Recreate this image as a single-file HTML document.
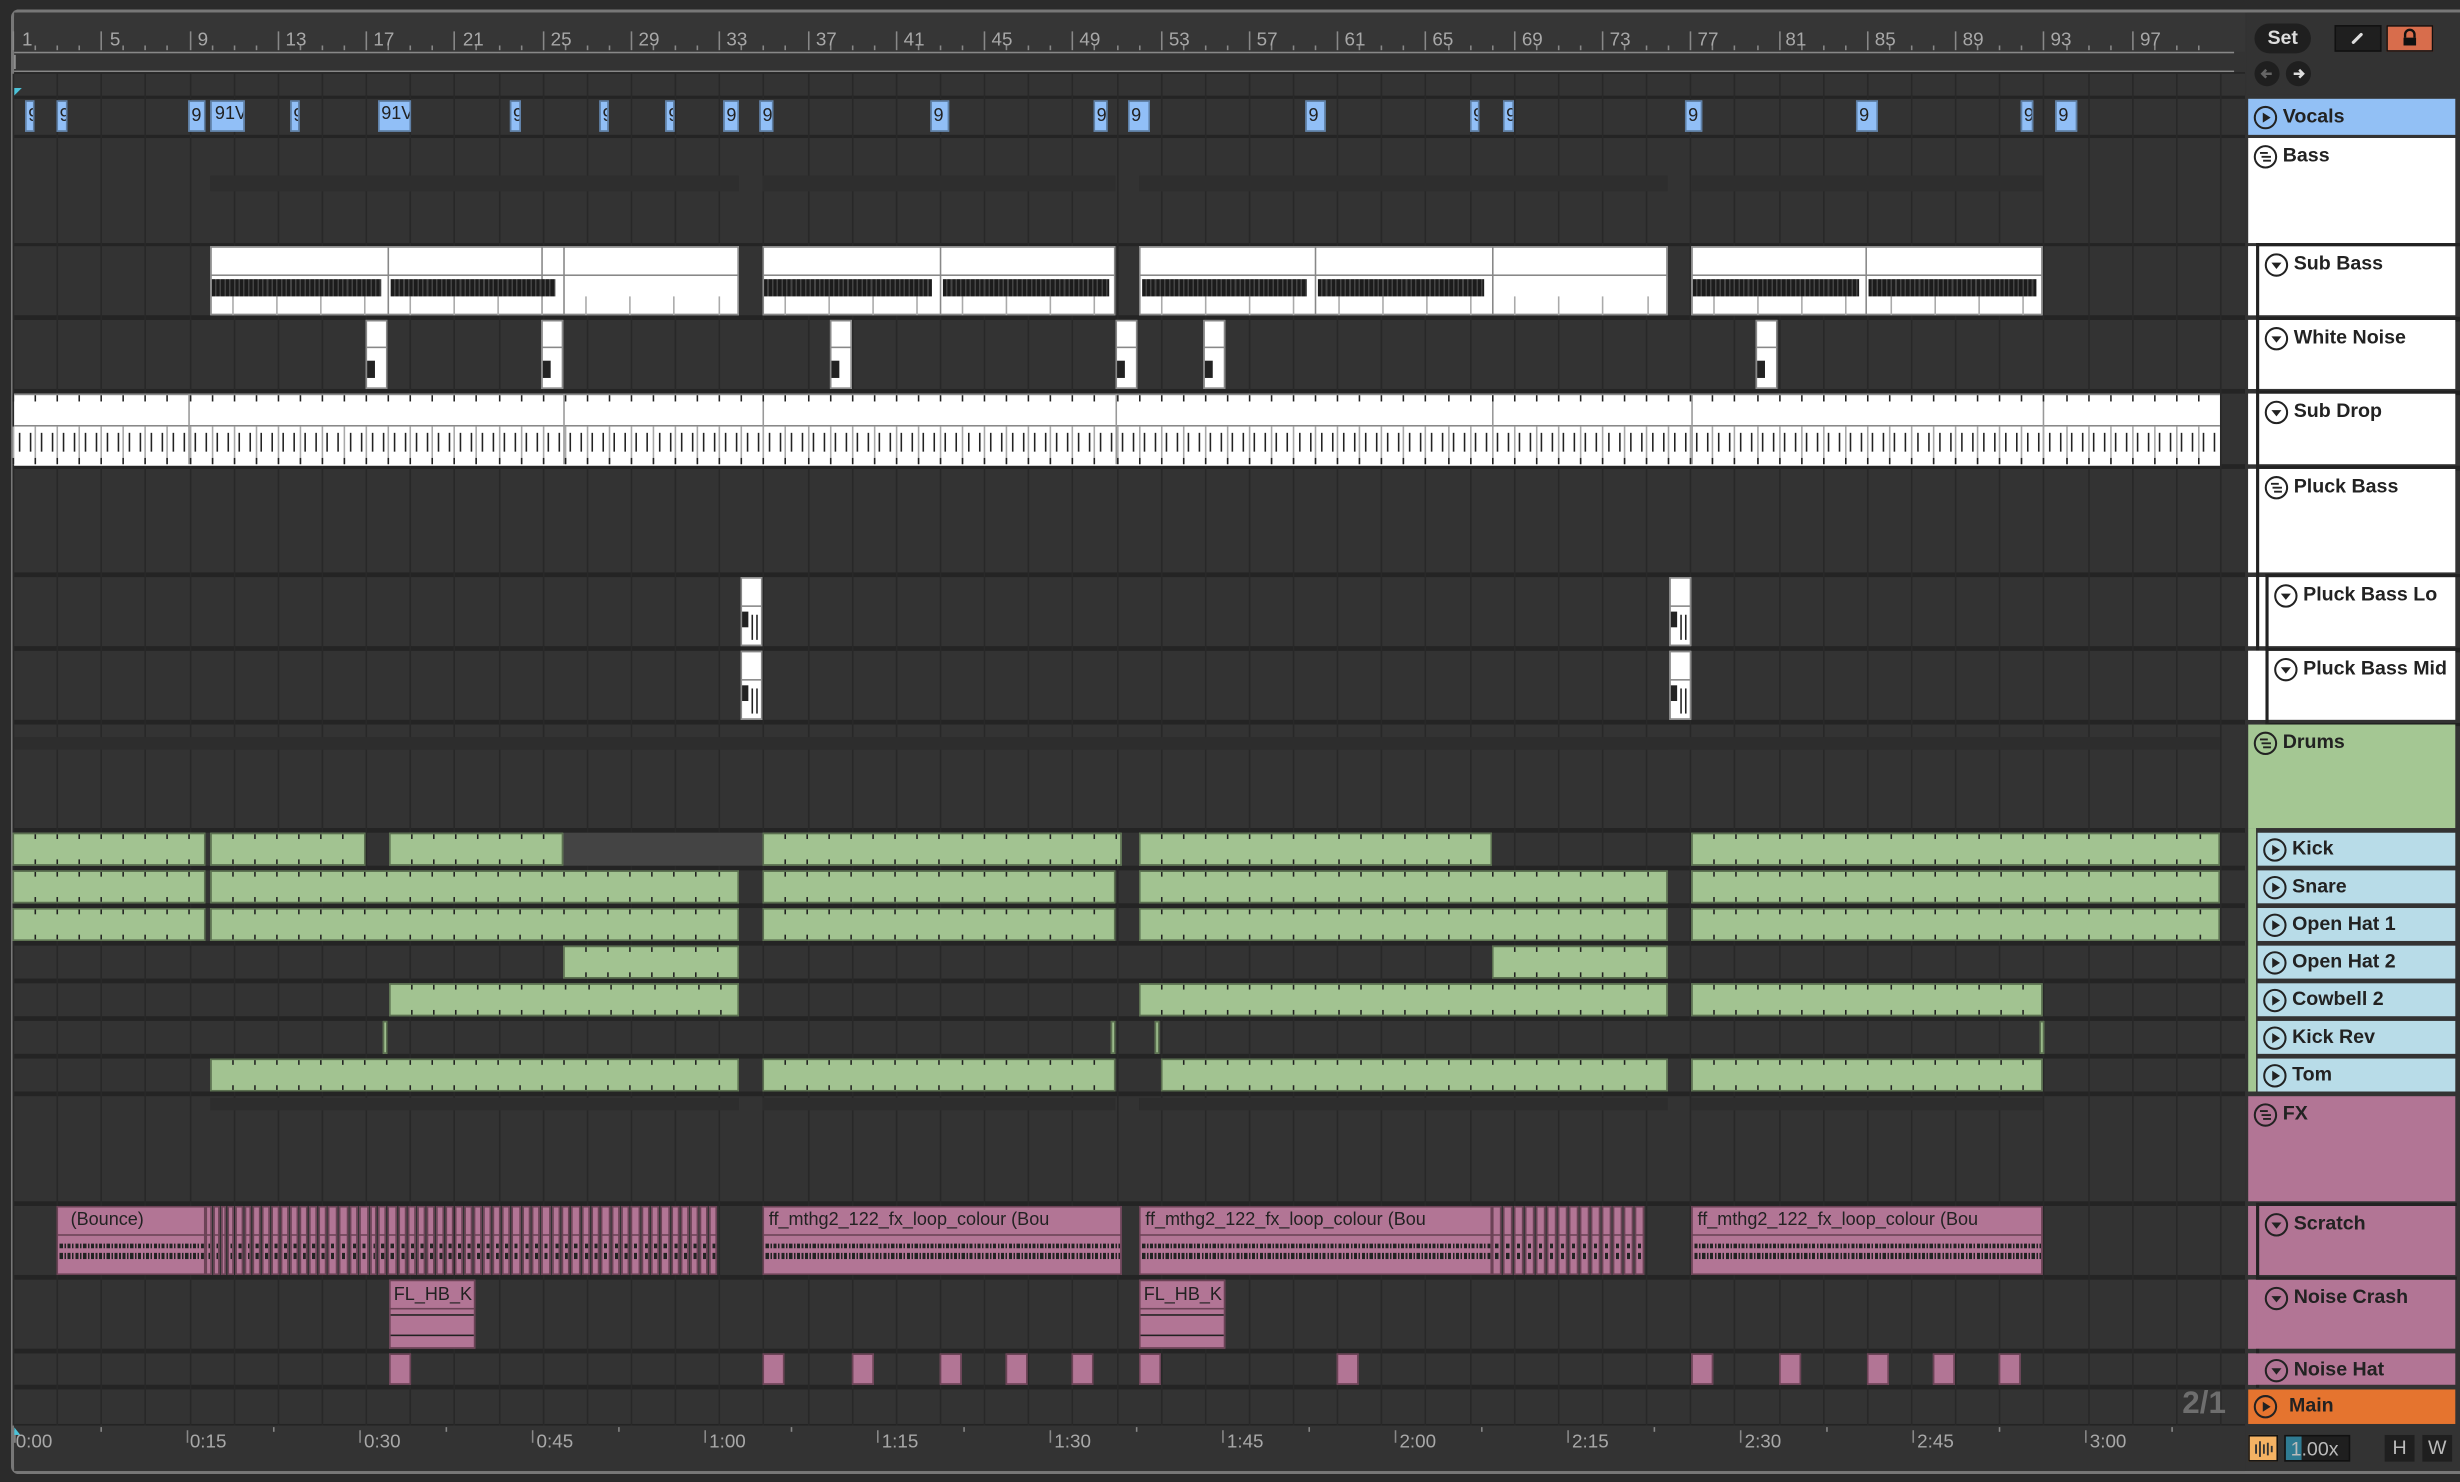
<!DOCTYPE html>
<html><head><meta charset="utf-8">
<style>
html,body{margin:0;padding:0;background:#2b2b2b;width:2460px;height:1482px;overflow:hidden}
#w{position:absolute;left:0;top:0;width:1568px;height:945px;transform-origin:0 0;transform:scale(1.56888,1.56825);background:#2b2b2b;overflow:hidden;font-family:"Liberation Sans",sans-serif}
.a{position:absolute}
.hd{position:absolute;font-size:12.5px;font-weight:bold;color:#222;box-sizing:border-box}
.hd span{position:absolute;left:22px;top:4px;white-space:nowrap}
.hd svg{position:absolute;left:3px;top:4px}
.rl{position:absolute;top:18px;font-size:12px;color:#a8a8a8}
.tl{position:absolute;top:912px;font-size:12px;color:#a8a8a8}
.ct{position:absolute;font-size:11.5px;color:#222;white-space:nowrap;overflow:hidden}
</style></head><body>
<div id="w">
<!-- frame -->
<div class="a" style="left:7px;top:6px;width:1561px;height:934px;border:2px solid #777;border-right:none;border-radius:5px 0 0 5px;box-sizing:border-box;background:#333"></div>
<div class="a" id="arr" style="left:9px;top:8px;width:1422px;height:930px;overflow:hidden"></div>
<div id="clips"></div>

<!-- ruler labels -->
<div id="rul"></div>
<div class="rl" style="left:14px">1</div><div class="rl" style="left:70px">5</div><div class="rl" style="left:126px">9</div><div class="rl" style="left:182px">13</div><div class="rl" style="left:238px">17</div><div class="rl" style="left:295px">21</div><div class="rl" style="left:351px">25</div><div class="rl" style="left:407px">29</div><div class="rl" style="left:463px">33</div><div class="rl" style="left:520px">37</div><div class="rl" style="left:576px">41</div><div class="rl" style="left:632px">45</div><div class="rl" style="left:688px">49</div><div class="rl" style="left:745px">53</div><div class="rl" style="left:801px">57</div><div class="rl" style="left:857px">61</div><div class="rl" style="left:913px">65</div><div class="rl" style="left:970px">69</div><div class="rl" style="left:1026px">73</div><div class="rl" style="left:1082px">77</div><div class="rl" style="left:1138px">81</div><div class="rl" style="left:1195px">85</div><div class="rl" style="left:1251px">89</div><div class="rl" style="left:1307px">93</div><div class="rl" style="left:1364px">97</div>

<div class="tl" style="left:10px">0:00</div><div class="tl" style="left:121px">0:15</div><div class="tl" style="left:232px">0:30</div><div class="tl" style="left:342px">0:45</div><div class="tl" style="left:452px">1:00</div><div class="tl" style="left:562px">1:15</div><div class="tl" style="left:672px">1:30</div><div class="tl" style="left:782px">1:45</div><div class="tl" style="left:892px">2:00</div><div class="tl" style="left:1002px">2:15</div><div class="tl" style="left:1112px">2:30</div><div class="tl" style="left:1222px">2:45</div><div class="tl" style="left:1332px">3:00</div>

<!-- clip labels -->
<div class="ct" style="left:137px;top:67px;width:18px">91V</div>
<div class="ct" style="left:243px;top:67px;width:18px">91V</div>
<div class="ct" style="left:45px;top:772px;width:85px">(Bounce)</div>
<div class="ct" style="left:490px;top:772px;width:224px">ff_mthg2_122_fx_loop_colour (Bou</div>
<div class="ct" style="left:730px;top:772px;width:220px">ff_mthg2_122_fx_loop_colour (Bou</div>
<div class="ct" style="left:1082px;top:772px;width:220px">ff_mthg2_122_fx_loop_colour (Bou</div>
<div class="ct" style="left:251px;top:820px;width:52px">FL_HB_K</div>
<div class="ct" style="left:729px;top:820px;width:52px">FL_HB_K</div>

<!-- 2/1 -->
<div class="a" style="left:1391px;top:884px;font-size:20px;font-weight:bold;color:#6e6e6e">2/1</div>

<!-- top right controls -->
<div class="a" style="left:1432px;top:8px;width:136px;height:52px;background:#333"></div>
<div class="a" style="left:1437px;top:15px;width:36px;height:19px;border-radius:10px;background:#1f1f1f;color:#ddd;font-size:12.5px;font-weight:bold;text-align:center;line-height:19px">Set</div>
<div class="a" style="left:1488px;top:16px;width:30px;height:17px;background:#1f1f1f;border:1px solid #111;box-sizing:border-box"><svg width="30" height="17" class="a" style="left:-1px;top:-1px"><line x1="12" y1="11" x2="17" y2="6" stroke="#ddd" stroke-width="2" stroke-linecap="round"/></svg></div>
<div class="a" style="left:1521px;top:16px;width:30px;height:17px;background:#d86d4c;border:1px solid #111;box-sizing:border-box"><svg width="30" height="17" class="a" style="left:-1px;top:-1px"><path d="M12 8 v-2 a3 3 0 0 1 6 0 v2" fill="none" stroke="#111" stroke-width="1.5"/><rect x="11" y="8" width="8" height="5" fill="#111"/></svg></div>
<div class="a" style="left:1437px;top:39px;width:16px;height:16px;border-radius:50%;background:#1f1f1f"><svg width="16" height="16"><path d="M11 8H5M7.5 5.5 5 8l2.5 2.5" fill="none" stroke="#666" stroke-width="1.6"/></svg></div>
<div class="a" style="left:1457px;top:39px;width:16px;height:16px;border-radius:50%;background:#1f1f1f"><svg width="16" height="16"><path d="M5 8h6M8.5 5.5 11 8l-2.5 2.5" fill="none" stroke="#ddd" stroke-width="1.6"/></svg></div>

<!-- headers -->
<div id="hdrs">
<div class="hd" style="left:1433px;top:63px;width:132px;height:23px;background:#92c0f5"><svg class="ip" width="16" height="16"></svg><span>Vocals</span></div>
<div class="hd" style="left:1433px;top:88px;width:132px;height:67px;background:#fff"><svg class="ig" width="16" height="16"></svg><span>Bass</span></div>
<div class="hd" style="left:1433px;top:157px;width:132px;height:44px;background:#fff;border-left:5px solid #fff"><div class="a" style="left:0;top:-2px;width:128px;height:46px;border:2px solid #222;border-right:none"></div><svg class="id" width="16" height="16" style="left:5px"></svg><span style="left:24px">Sub Bass</span></div>
<div class="hd" style="left:1433px;top:204px;width:132px;height:44px;background:#fff;border-left:5px solid #fff"><div class="a" style="left:0;top:-2px;width:128px;height:46px;border:2px solid #222;border-right:none"></div><svg class="id" width="16" height="16" style="left:5px"></svg><span style="left:24px">White Noise</span></div>
<div class="hd" style="left:1433px;top:251px;width:132px;height:45px;background:#fff;border-left:5px solid #fff"><div class="a" style="left:0;top:-2px;width:128px;height:47px;border:2px solid #222;border-right:none"></div><svg class="id" width="16" height="16" style="left:5px"></svg><span style="left:24px">Sub Drop</span></div>
<div class="hd" style="left:1433px;top:299px;width:132px;height:66px;background:#fff;border-left:5px solid #fff"><div class="a" style="left:0;top:-2px;width:128px;height:68px;border:2px solid #222;border-right:none;border-bottom:none"></div><svg class="ig" width="16" height="16" style="left:5px"></svg><span style="left:24px">Pluck Bass</span></div>
<div class="hd" style="left:1433px;top:368px;width:132px;height:44px;background:#fff;border-left:11px solid #fff"><div class="a" style="left:-6px;top:-2px;width:2px;height:92px;background:#222"></div><div class="a" style="left:0;top:-2px;width:122px;height:46px;border:2px solid #222;border-right:none"></div><svg class="id" width="16" height="16" style="left:5px"></svg><span style="left:24px">Pluck Bass Lo</span></div>
<div class="hd" style="left:1433px;top:415px;width:132px;height:44px;background:#fff;border-left:11px solid #fff"><div class="a" style="left:0;top:-2px;width:122px;height:46px;border:2px solid #222;border-right:none"></div><svg class="id" width="16" height="16" style="left:5px"></svg><span style="left:24px">Pluck Bass Mid</span></div>
<div class="hd" style="left:1433px;top:462px;width:132px;height:66px;background:#a4c793"><svg class="ig" width="16" height="16"></svg><span>Drums</span></div>
<div id="drh"></div>
<div class="hd" style="left:1433px;top:699px;width:132px;height:67px;background:#b27595"><svg class="ig" width="16" height="16"></svg><span>FX</span></div>
<div class="hd" style="left:1433px;top:769px;width:132px;height:44px;background:#b27595;border-left:5px solid #b27595"><div class="a" style="left:0;top:-2px;width:128px;height:118px;border-left:2px solid #222"></div><div class="a" style="left:0;top:-2px;width:128px;height:2px;background:#222"></div><svg class="id" width="16" height="16" style="left:5px"></svg><span style="left:24px">Scratch</span></div>
<div class="hd" style="left:1433px;top:816px;width:132px;height:44px;background:#b27595;border-left:5px solid #b27595"><div class="a" style="left:0;top:-2px;width:128px;height:2px;background:#222"></div><svg class="id" width="16" height="16" style="left:5px"></svg><span style="left:24px">Noise Crash</span></div>
<div class="hd" style="left:1433px;top:863px;width:132px;height:20px;background:#b27595;border-left:5px solid #b27595;overflow:hidden"><div class="a" style="left:0;top:-2px;width:128px;height:2px;background:#222"></div><svg class="id" width="16" height="16" style="left:5px;top:3px"></svg><span style="left:24px;top:3px">Noise Hat</span></div>
<div class="hd" style="left:1433px;top:886px;width:132px;height:22px;background:#e5742f"><svg class="ip" width="16" height="16" style="top:3px"></svg><span style="left:26px;top:3px">Main</span></div>
<div class="hd" style="left:1439px;top:531px;width:126px;height:21px;background:#b8dce8"><svg class="ip" width="16" height="16" style="top:3px"></svg><span style="top:3px">Kick</span></div>
<div class="hd" style="left:1439px;top:555px;width:126px;height:21px;background:#b8dce8"><svg class="ip" width="16" height="16" style="top:3px"></svg><span style="top:3px">Snare</span></div>
<div class="hd" style="left:1439px;top:579px;width:126px;height:21px;background:#b8dce8"><svg class="ip" width="16" height="16" style="top:3px"></svg><span style="top:3px">Open Hat 1</span></div>
<div class="hd" style="left:1439px;top:603px;width:126px;height:21px;background:#b8dce8"><svg class="ip" width="16" height="16" style="top:3px"></svg><span style="top:3px">Open Hat 2</span></div>
<div class="hd" style="left:1439px;top:627px;width:126px;height:21px;background:#b8dce8"><svg class="ip" width="16" height="16" style="top:3px"></svg><span style="top:3px">Cowbell 2</span></div>
<div class="hd" style="left:1439px;top:651px;width:126px;height:21px;background:#b8dce8"><svg class="ip" width="16" height="16" style="top:3px"></svg><span style="top:3px">Kick Rev</span></div>
<div class="hd" style="left:1439px;top:675px;width:126px;height:21px;background:#b8dce8"><svg class="ip" width="16" height="16" style="top:3px"></svg><span style="top:3px">Tom</span></div>
<div class="a" style="left:1433px;top:528px;width:5px;height:168px;background:#a4c793"></div>
</div>

<!-- bottom right -->
<div class="a" style="left:1433px;top:915px;width:19px;height:17px;background:#f4b263;border:1px solid #111;box-sizing:border-box"><svg width="17" height="15"><path d="M4 5v6M6.5 3v10M9 5v6M11.5 4v8M14 6v4" stroke="#333" stroke-width="1.2"/></svg></div>
<div class="a" style="left:1456px;top:915px;width:42px;height:17px;background:#1f1f1f;border:1px solid #111;box-sizing:border-box"><div class="a" style="left:0;top:0;width:10px;height:15px;background:#2f7b92"></div><div class="a" style="left:3px;top:1px;font-size:12.5px;color:#bbb">1.00x</div></div>
<div class="a" style="left:1520px;top:915px;width:19px;height:17px;background:#1f1f1f;color:#bbb;font-size:12.5px;text-align:center;line-height:17px">H</div>
<div class="a" style="left:1544px;top:915px;width:19px;height:17px;background:#1f1f1f;color:#bbb;font-size:12.5px;text-align:center;line-height:17px">W</div>
</div>

<script>
var W=document.getElementById('w');
function d(x,y,w,h,s){var e=document.createElement('div');e.className='a';e.style.cssText='left:'+x+'px;top:'+y+'px;width:'+w+'px;height:'+h+'px;'+(s||'');W.insertBefore(e,document.getElementById('clips'));return e;}
// ruler area
d(9,8,1422,25,'background:#363636');
d(9,33,1415,1,'background:#888');d(9,45,1415,1,'background:#888');
for(var n=1;n<=100;n++){var x=8+(n-1)*14.07;if(x>1415)break;d(x,(n%4==1)?20:29,1,(n%4==1)?12:3,'background:#888');}
var s=document.createElementNS('http://www.w3.org/2000/svg','svg');
// lanes
var rows=[[47,61],[63,86],[88,155],[157,201],[204,248],[251,296],[299,365],[368,412],[415,459],[462,528],[531,552],[555,576],[579,600],[603,624],[627,648],[651,672],[675,696],[699,766],[769,813],[816,860],[863,883],[886,908]];
d(9,46,1422,864,'background:#242424');
rows.forEach(function(r){d(9,r[0],1422,r[1]-r[0],'background:#333');});
for(var x=8;x<1431;x+=28.14){d(x,47,1,862,'background:#282828');}
// group summary faint bars
[[134,471],[486,711],[726,1063],[1078,1302]].forEach(function(c){d(c[0],112,c[1]-c[0],10,'background:#2e2e2e');d(c[0],470,c[1]-c[0],8,'background:#2d2d2d');d(c[0],700,c[1]-c[0],8,'background:#2d2d2d');});
d(9,470,1406,8,'background:#2d2d2d');
// time ruler
d(9,909,1422,29,'background:#333');
for(var i=0;i<26;i++){var x=9+i*55;d(x,i%2==0?912:910,1,i%2==0?8:3,'background:#888');}
d(9,910,4,5,'background:#4cc3d9;clip-path:polygon(0 0,100% 100%,0 100%)');
// loop markers
d(9,35,8,9,'border-left:1px solid #999');
// vocals
var v=[[16,22],[36,43],[120,131],[134,156],[185,191],[241,262],[325,332],[382,388],[424,430],[461,471],[484,493],[593,605],[697,706],[719,733],[832,845],[937,943],[958,965],[1074,1085],[1183,1197],[1288,1296],[1310,1324]];
v.forEach(function(c){var e=d(c[0],64,c[1]-c[0],20,'background:#91bff7;border:1px solid #5e7fa5;box-sizing:border-box;font-size:11.5px;color:#222;overflow:hidden;padding-left:1px;line-height:18px');if(c[1]-c[0]<20&&c[1]-c[0]>5)e.textContent='9';});
d(9,56,5,5,'background:#4cc3d9;clip-path:polygon(0 0,100% 0,0 100%)');
// sub bass
[[134,471,[247,345,359],[[134,243],[248,354]]],[486,711,[599],[[486,594],[600,707]]],[726,1063,[838,951],[[727,833],[839,946]]],[1078,1302,[1189],[[1078,1185],[1190,1298]]]].forEach(function(c){
 d(c[0],157,c[1]-c[0],44,'background:#fff;border:1px solid #888;box-sizing:border-box');
 d(c[0],175,c[1]-c[0],1,'background:#888');
 c[2].forEach(function(x){d(x,157,1,44,'background:#888');});
 for(var x=c[0]+14;x<c[1];x+=28.14)d(x,189,1,12,'background:#aaa');
 c[3].forEach(function(n){d(n[0]+1,178,n[1]-n[0]-1,11,'background:repeating-linear-gradient(90deg,#1c1c1c 0 2px,#444 2px 3px)');});
});
// white noise
[233,345,529,711,767,1119].forEach(function(x){d(x,204,14,44,'background:#fff;border:1px solid #888;box-sizing:border-box');d(x,221,14,1,'background:#888');d(x+1,230,5,11,'background:#222');});
// sub drop
d(9,251,1406,45,'background:#fff;border-top:1px solid #888');
d(9,271,1406,1,'background:#888');
[120,359,486,711,951,1078,1302].forEach(function(x){d(x,251,1,45,'background:#999');});
for(var x=8;x<1415;x+=14.07){d(x,272,1,24,'background:#aaa');d(x,252,1,4,'background:#222');d(x,292,1,4,'background:#222');d(x+3.5,276,1,12,'background:#222');d(x+10.5,276,1,12,'background:#222');}
// pluck small
[472,1064].forEach(function(x){[368,415].forEach(function(y){d(x,y,14,44,'background:#fff;border:1px solid #888;box-sizing:border-box');d(x,y+18,14,1,'background:#888');d(x+1,y+22,4,10,'background:#222');d(x+7,y+24,1,16,'background:#222');d(x+10,y+24,1,16,'background:#222');});});
// drums
function g(x1,x2,y,h,col){var e=d(x1,y,x2-x1,h,'background:'+(col||'#a2c391')+';border:1px solid #5b7050;box-sizing:border-box');for(var x=x1+14;x<x2-2;x+=14.07){d(x,y+1,1,3,'background:#222');d(x,y+h-4,1,3,'background:#222');}}
d(359,531,127,21,'background:#444');
[[8,131],[134,233],[248,359],[486,715],[726,951],[1078,1415]].forEach(function(c){g(c[0],c[1],531,21);});
[555,579].forEach(function(y){[[8,131],[134,471],[486,711],[726,1063],[1078,1415]].forEach(function(c){g(c[0],c[1],y,21);});});
[[359,471],[951,1063]].forEach(function(c){g(c[0],c[1],603,21);});
[[248,471],[726,1063],[1078,1302]].forEach(function(c){g(c[0],c[1],627,21);});
[244,708,736,1300].forEach(function(x){d(x,651,3,21,'background:#a2c391;border:1px solid #5b7050;box-sizing:border-box');});
[[134,471],[486,711],[740,1063],[1078,1302]].forEach(function(c){g(c[0],c[1],675,21);});
// FX scratch
function p(x1,x2,y,h,wave){d(x1,y,x2-x1,h,'background:#b27595;border:1px solid #6b4356;box-sizing:border-box');d(x1,y+h*0.42,x2-x1,1,'background:#6b4356');if(wave){d(x1+1,y+h*0.5,x2-x1-2,h*0.45,'background:repeating-linear-gradient(90deg,#b27595 0 1px,#222 1px 3px,#b27595 3px 4px,#222 4px 5px);clip-path:polygon(0 40%,100% 40%,100% 60%,0 60%,0 10%,100% 10%,100% 25%,0 25%)');}}
p(36,131,769,44,1);
var sl=[131,136,141,145,150,156,161,167,173,179,185,191,197,203,209,216,223,229,236,241,247,254,260,266,272,278,284,290,296,302,308,314,320,326,333,339,345,352,358,364,371,377,383,390,396,402,409,415,421,428,434,440,446,452,458];
for(var i=0;i<sl.length-1;i++)p(sl[i],sl[i+1]-1,769,44,1);
p(486,715,769,44,1);p(726,951,769,44,1);p(1078,1302,769,44,1);
var sl2=[951,958,965,972,979,986,993,1000,1007,1014,1021,1028,1035,1042,1049];
for(var i=0;i<sl2.length-1;i++)p(sl2[i],sl2[i+1]-1,769,44,1);
[248,726].forEach(function(x){p(x,x+55,816,44,0);d(x+1,838,53,1,'background:#222');d(x+1,851,53,1,'background:#222');});
[248,486,543,599,641,683,726,852,1078,1134,1190,1232,1274].forEach(function(x){d(x,863,14,20,'background:#b27595;border:1px solid #6b4356;box-sizing:border-box');});
// icons
var ic={ip:'<circle cx="8" cy="8" r="6.8" fill="none" stroke="#222" stroke-width="1.3"/><path d="M6.3 4.8v6.4l5-3.2z" fill="#222"/>',
id:'<circle cx="8" cy="8" r="6.8" fill="none" stroke="#222" stroke-width="1.3"/><path d="M4.8 6.5h6.4l-3.2 4z" fill="#222"/>',
ig:'<circle cx="8" cy="8" r="6.8" fill="none" stroke="#222" stroke-width="1.3"/><path d="M4.5 5.5h5M5.5 8h6M6.5 10.5h5" stroke="#222" stroke-width="1.2"/>'};
['ip','id','ig'].forEach(function(k){document.querySelectorAll('svg.'+k).forEach(function(s){s.innerHTML=ic[k];});});
</script>
</body></html>
